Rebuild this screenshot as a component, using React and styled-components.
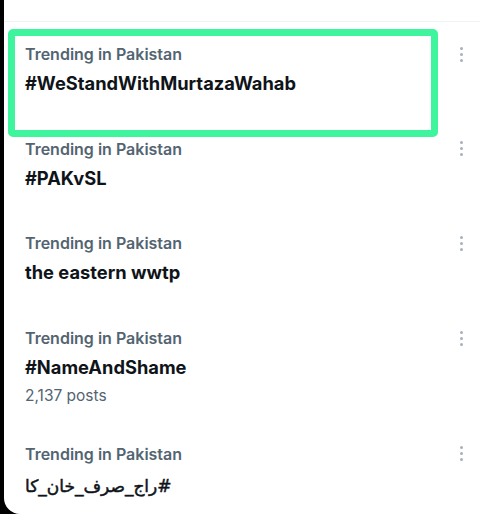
import React from "react";
import styled, { createGlobalStyle } from "styled-components";

const Global = createGlobalStyle`
  html, body { margin: 0; padding: 0; background: #000; }
  body { width: 480px; height: 514px; overflow: hidden; }
`;

const Panel = styled.div`
  margin-left: 4px;
  height: 514px;
  background: #fff;
  border-bottom-left-radius: 16px;
  font-family: Inter, "Noto Sans", sans-serif;
  overflow: hidden;
`;

const TopSpace = styled.div`
  height: 21px;
  border-bottom: 1px solid #eff3f4;
`;

const List = styled.div`
  display: flex;
  flex-direction: column;
`;

const Row = styled.div`
  position: relative;
  display: flex;
  align-items: flex-start;
  padding: 22px 15px 20.7px 21px;
  min-height: 52px;
`;

const Body = styled.div`
  flex: 1;
  display: flex;
  flex-direction: column;
`;

const Label = styled.div`
  font-size: 16px;
  line-height: 20px;
  font-weight: 600;
  color: #536471;
`;

const Tag = styled.div`
  margin-top: 6px;
  font-size: 18.3px;
  line-height: 26px;
  font-weight: 700;
  color: #0f1419;
`;

const Urdu = styled.span`
  display: inline-block;
  direction: rtl;
  font-family: "DejaVu Sans", "Noto Sans", sans-serif;
  font-weight: 400;
  font-size: 17px;
  -webkit-text-stroke: 0.5px #0f1419;
  position: relative;
  top: 2px;
`;

const Posts = styled.div`
  margin-top: 6px;
  margin-bottom: -5px;
  font-size: 15.5px;
  line-height: 20px;
  color: #536471;
`;

const More = styled.div`
  width: 8px;
  height: 20px;
  display: flex;
  flex-direction: column;
  align-items: center;
  justify-content: center;
  gap: 3px;
`;

const Dot = styled.span`
  width: 3px;
  height: 3px;
  border-radius: 50%;
  background: #a7b1ba;
`;

const Highlight = styled.div`
  position: absolute;
  left: 4px;
  top: 7px;
  width: 430px;
  height: 108px;
  box-sizing: border-box;
  border: 7px solid #3ef59e;
  border-radius: 5px;
  pointer-events: none;
`;

const trends = [
  { tag: "#WeStandWithMurtazaWahab", highlight: true },
  { tag: "#PAKvSL" },
  { tag: "the eastern wwtp" },
  { tag: "#NameAndShame", posts: "2,137 posts" },
  { tag: "#راج_صرف_خان_کا", rtl: true },
];

export default function App() {
  return (
    <>
      <Global />
      <Panel>
        <TopSpace />
        <List>
          {trends.map((t, i) => (
            <Row key={i}>
              <Body>
                <Label>Trending in Pakistan</Label>
                <Tag>{t.rtl ? <Urdu dir="rtl">{t.tag}</Urdu> : t.tag}</Tag>
                {t.posts && <Posts>{t.posts}</Posts>}
              </Body>
              <More>
                <Dot />
                <Dot />
                <Dot />
              </More>
              {t.highlight && <Highlight />}
            </Row>
          ))}
        </List>
      </Panel>
    </>
  );
}
